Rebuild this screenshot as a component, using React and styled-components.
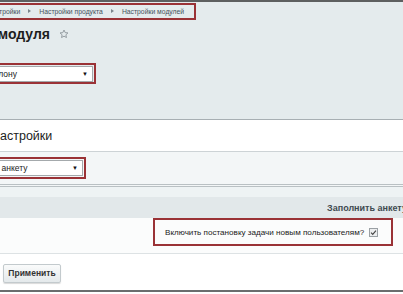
import React from 'react'
import styled, { createGlobalStyle } from 'styled-components'

const GlobalStyle = createGlobalStyle`
    html, body {
        margin: 0;
        padding: 0;
        overflow: hidden;
        background: #e4ebed;
        font-family: "Liberation Sans", Arial, sans-serif;
        color: #222;
        white-space: nowrap;
    }
`

const Page = styled.div`
    width: 403px;
    height: 294px;
    overflow: hidden;
    display: flex;
    flex-direction: column;
    background: #e4ebed;
`

const TopLine = styled.div`
    height: 2px;
    background: #5d5f60;
`

const RedFrame = styled.div`
    border: 2px solid #9a3236;
    box-sizing: border-box;
    display: flex;
    align-items: center;
    flex-shrink: 0;
    margin-left: ${ p => p.$shift || 0 }px;
    width: ${ p => p.$width }px;
    height: ${ p => p.$height }px;
    padding: 0 ${ p => p.$pad || 0 }px;
`

const Crumbs = styled.div`
    display: flex;
    align-items: center;
    gap: 8px;
    font-size: 6.8px;
    color: #44525c;
    padding-left: 4px;

    & > span {
        flex-shrink: 0;
    }
`

const Arrow = styled.span`
    width: 0;
    height: 0;
    border-left: 3px solid #7a858c;
    border-top: 2.5px solid transparent;
    border-bottom: 2.5px solid transparent;
`

const TitleRow = styled.div`
    display: flex;
    align-items: center;
    gap: 9px;
    margin: 6px 0 0 -80px;
    height: 22px;
`

const Title = styled.h1`
    margin: 0;
    font-size: 14px;
    font-weight: bold;
    color: #1d1d1d;
    flex-shrink: 0;
`

const SelectBlock = styled.div`
    margin-top: ${ p => p.$top }px;
`

const FakeSelect = styled.div`
    flex: 1;
    height: 16px;
    box-sizing: border-box;
    background: #fff;
    border: 1px solid #a4a9ac;
    display: flex;
    align-items: center;
    justify-content: space-between;
    padding: 0 4px 0 ${ p => p.$indent }px;
    font-size: 8.5px;
    color: #222;

    & > .caret {
        font-size: 6px;
        color: #111;
    }
`

const Panel = styled.div`
    margin-top: 35px;
    border-top: 1px solid #a7afb3;
    display: flex;
    flex-direction: column;
    flex: 1;
`

const PanelHead = styled.div`
    height: 31px;
    background: #fff;
    border-bottom: 1px solid #cdd3d6;
    display: flex;
    align-items: center;
    font-size: 12.5px;
    color: #222;
    margin-left: -9px;
`

const FilterRow = styled.div`
    height: 32px;
    background: #f3f6f7;
    border-bottom: 3px double #b9c0c3;
    display: flex;
    align-items: center;
`

const Strip = styled.div`
    height: 10px;
    background: #eef3f4;
`

const TableHead = styled.div`
    height: 21px;
    background: #e2e8ea;
    display: flex;
    align-items: center;
    justify-content: flex-end;
    font-size: 9px;
    font-weight: bold;
    color: #3f4a50;
    margin-right: -4px;
`

const FieldRow = styled.div`
    height: 35px;
    background: #fbfcfc;
    border-bottom: 1px solid #dde2e4;
    display: flex;
    align-items: flex-start;
    justify-content: flex-end;
    padding-right: 10px;
`

const FieldLabel = styled.span`
    font-size: 8.1px;
    color: #222;
`

const Check = styled.span`
    width: 9px;
    height: 9px;
    box-sizing: border-box;
    border: 1px solid #9aa0a4;
    background: #eceeef;
    display: flex;
    align-items: center;
    justify-content: center;
    flex-shrink: 0;
`

const Footer = styled.div`
    flex: 1;
    background: #fff;
    display: flex;
    flex-direction: column;
`

const ButtonRow = styled.div`
    padding: 8px 0 0 3px;
    height: 28px;
`

const Button = styled.button`
    height: 19px;
    width: 58px;
    padding: 0;
    border: 1px solid #c3cacd;
    border-radius: 2px;
    background: linear-gradient( #fafbfb, #e4e9eb );
    box-shadow: 0 1px 1px rgba( 0, 0, 0, 0.15 );
    font-family: "Liberation Sans", Arial, sans-serif;
    font-size: 8.5px;
    font-weight: bold;
    color: #333;
`

const BottomLine = styled.div`
    height: 2px;
    background: #6a6d6e;
    margin-top: auto;
    margin-bottom: 2px;
`

function Star() {
    return (
        <svg width='10' height='10' viewBox='0 0 24 24' fill='none' stroke='#8d969b' strokeWidth='2.2' strokeLinejoin='round'>
            <path d='M12 2.5l2.9 6.2 6.6.7-5 4.5 1.4 6.6L12 17.2 6.1 20.5l1.4-6.6-5-4.5 6.6-.7z' />
        </svg>
    )
}

export default function App() {

    return (
        <Page>
            <GlobalStyle />
            <TopLine />

            <RedFrame $shift={ -19 } $width={ 215 } $height={ 17 } style={{ marginTop: 1 }}>
                <Crumbs>
                    <span>Настройки</span>
                    <Arrow />
                    <span>Настройки продукта</span>
                    <Arrow />
                    <span>Настройки модулей</span>
                </Crumbs>
            </RedFrame>

            <TitleRow>
                <Title>Настройки модуля</Title>
                <Star />
            </TitleRow>

            <SelectBlock $top={ 21 }>
                <RedFrame $shift={ -40 } $width={ 136 } $height={ 21 } $pad={ 1 }>
                    <FakeSelect $indent={ 5 }>
                        <span>По шаблону</span>
                        <span className='caret'>▼</span>
                    </FakeSelect>
                </RedFrame>
            </SelectBlock>

            <Panel>
                <PanelHead>Настройки</PanelHead>

                <FilterRow>
                    <RedFrame $shift={ -40 } $width={ 126 } $height={ 22 } $pad={ 1 }>
                        <FakeSelect $indent={ 1 }>
                            <span>Выбрать анкету</span>
                            <span className='caret'>▼</span>
                        </FakeSelect>
                    </RedFrame>
                </FilterRow>

                <Strip />

                <TableHead>Заполнить анкету</TableHead>

                <FieldRow>
                    <RedFrame $width={ 240 } $height={ 28 } style={{ paddingLeft: 10, gap: 5 }}>
                        <FieldLabel>Включить постановку задачи новым пользователям?</FieldLabel>
                        <Check>
                            <svg width='7' height='7' viewBox='0 0 10 10' fill='none' stroke='#444' strokeWidth='1.6'>
                                <path d='M1.5 5.2l2.4 2.4 4.6-5.4' />
                            </svg>
                        </Check>
                    </RedFrame>
                </FieldRow>

                <Footer>
                    <ButtonRow>
                        <Button>Применить</Button>
                    </ButtonRow>
                    <BottomLine />
                </Footer>
            </Panel>
        </Page>
    )
}
